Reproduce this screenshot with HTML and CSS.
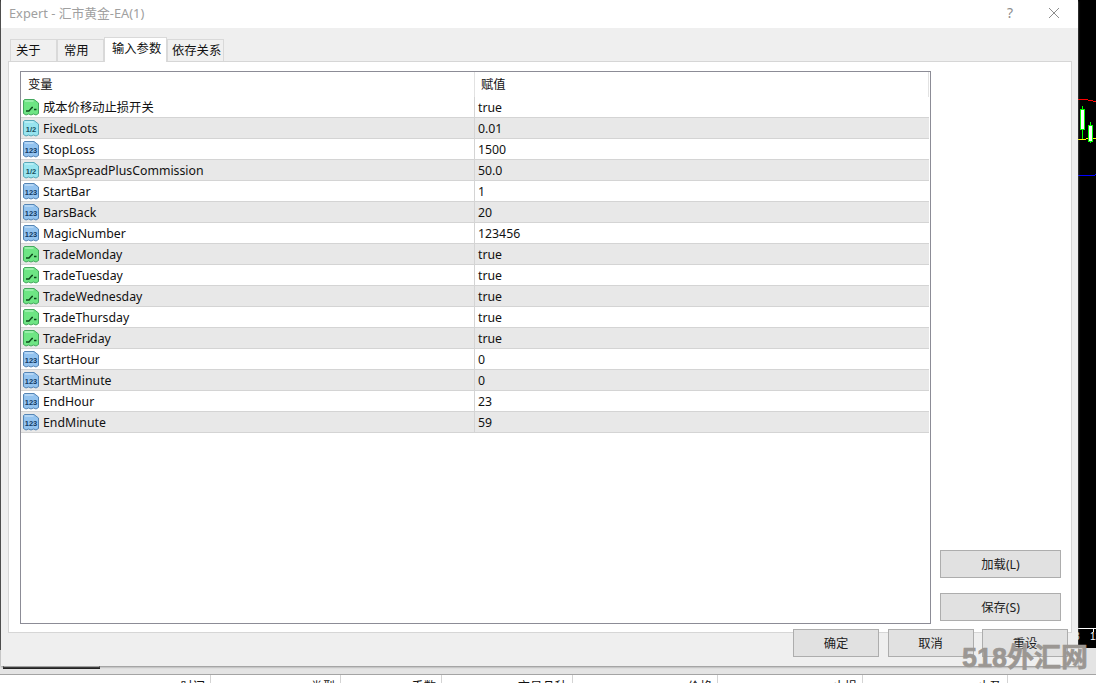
FILE: index.html
```html
<!DOCTYPE html>
<html lang="zh">
<head>
<meta charset="utf-8">
<title>Expert</title>
<link rel="stylesheet" href="styles.css">
</head>
<body>
<svg class="defs" width="0" height="0" aria-hidden="true">
  <defs>
    <symbol id="ico-bool" viewBox="0 0 16 17">
      <path d="M.5 1.500L1.500.5H11L15.500 4V14.500L13 16L10.500 15L8 16L5.500 15L3 16L.5 14.500Z" fill="#6ee584" stroke="#45a85e"/>
      <path d="M2 2H10.500" stroke="#c4f7cf"/>
      <path d="M3 12H6L9 8.500H10M11 10.500H13.500" fill="none" stroke="#0d4a1c" stroke-width="1.3"/>
    </symbol>
    <symbol id="ico-dbl" viewBox="0 0 16 17">
      <path d="M.5 1.500L1.500.5H11L15.500 4V14.500L13 16L10.500 15L8 16L5.500 15L3 16L.5 14.500Z" fill="#98e4ef" stroke="#5aa8b8"/>
      <path d="M2 2H10.500" stroke="#d3f6fa"/>
      <text class="ico-text dbl-text" x="8" y="11.500" text-anchor="middle">1/2</text>
    </symbol>
    <symbol id="ico-int" viewBox="0 0 16 17">
      <path d="M.5 1.500L1.500.5H11L15.500 4V14.500L13 16L10.500 15L8 16L5.500 15L3 16L.5 14.500Z" fill="#93c3ef" stroke="#5585b5"/>
      <path d="M2 2H10.500" stroke="#d5e8fa"/>
      <text class="ico-text int-text" x="8" y="11.500" text-anchor="middle">123</text>
    </symbol>
  </defs>
</svg>
<div class="desktop">
  <div class="left-edge"></div>
  <svg class="chart" width="18" height="648" viewBox="0 0 18 648" aria-hidden="true">
    <rect width="18" height="648" fill="#000"/>
    <path d="M0 99.500H10M10 100.500H15M15 101.500H18" fill="none" stroke="#f00"/>
    <path d="M0 139.500H8M8 138.500H18" fill="none" stroke="#ff0"/>
    <path d="M0 175.500H17M17 174.500H18" fill="none" stroke="#00f"/>
    <path d="M4.500 106V139M12.500 122V143" stroke="#0f0"/>
    <rect x="2.500" y="109.500" width="4" height="20" fill="#fff" stroke="#0f0"/>
    <rect x="10.500" y="125.500" width="4" height="16" fill="#fff" stroke="#0f0"/>
    <path d="M0 628.500H18M15.500 628V632" stroke="#fff"/>
    <text class="tick" x="-4" y="640">8</text>
    <text class="tick" x="12" y="640">12</text>
  </svg>
  <div class="tail-tab"></div>
  <div class="list-head">
    <span class="lh w1">时间</span><span class="lh w2">类型</span><span class="lh w3">手数</span><span class="lh w4">交易品种</span><span class="lh w5">价格</span><span class="lh w5">止损</span><span class="lh w5">止盈</span>
  </div>
  <section class="dialog">
    <header class="titlebar">
      <span class="title">Expert - 汇市黄金-EA(1)</span>
      <span class="help">?</span>
      <svg class="close" width="10" height="10" viewBox="0 0 10 10" aria-hidden="true"><path d="M0 0L10 10M10 0L0 10" stroke="#8d8d8d"/></svg>
    </header>
    <div class="tabs">
      <span class="tab tab-a">关于</span>
      <span class="tab tab-b">常用</span>
      <span class="tab active">输入参数</span>
      <span class="tab tab-d">依存关系</span>
    </div>
    <div class="panel">
      <div class="table">
        <div class="row head"><span class="var">变量</span><span class="val">赋值</span></div>
        <div class="row"><span class="var"><svg class="ico"><use href="#ico-bool"/></svg>成本价移动止损开关</span><span class="val">true</span></div>
        <div class="row"><span class="var"><svg class="ico"><use href="#ico-dbl"/></svg>FixedLots</span><span class="val">0.01</span></div>
        <div class="row"><span class="var"><svg class="ico"><use href="#ico-int"/></svg>StopLoss</span><span class="val">1500</span></div>
        <div class="row"><span class="var"><svg class="ico"><use href="#ico-dbl"/></svg>MaxSpreadPlusCommission</span><span class="val">50.0</span></div>
        <div class="row"><span class="var"><svg class="ico"><use href="#ico-int"/></svg>StartBar</span><span class="val">1</span></div>
        <div class="row"><span class="var"><svg class="ico"><use href="#ico-int"/></svg>BarsBack</span><span class="val">20</span></div>
        <div class="row"><span class="var"><svg class="ico"><use href="#ico-int"/></svg>MagicNumber</span><span class="val">123456</span></div>
        <div class="row"><span class="var"><svg class="ico"><use href="#ico-bool"/></svg>TradeMonday</span><span class="val">true</span></div>
        <div class="row"><span class="var"><svg class="ico"><use href="#ico-bool"/></svg>TradeTuesday</span><span class="val">true</span></div>
        <div class="row"><span class="var"><svg class="ico"><use href="#ico-bool"/></svg>TradeWednesday</span><span class="val">true</span></div>
        <div class="row"><span class="var"><svg class="ico"><use href="#ico-bool"/></svg>TradeThursday</span><span class="val">true</span></div>
        <div class="row"><span class="var"><svg class="ico"><use href="#ico-bool"/></svg>TradeFriday</span><span class="val">true</span></div>
        <div class="row"><span class="var"><svg class="ico"><use href="#ico-int"/></svg>StartHour</span><span class="val">0</span></div>
        <div class="row"><span class="var"><svg class="ico"><use href="#ico-int"/></svg>StartMinute</span><span class="val">0</span></div>
        <div class="row"><span class="var"><svg class="ico"><use href="#ico-int"/></svg>EndHour</span><span class="val">23</span></div>
        <div class="row"><span class="var"><svg class="ico"><use href="#ico-int"/></svg>EndMinute</span><span class="val">59</span></div>
      </div>
      <div class="side">
        <button class="btn side-btn">加载(L)</button>
        <button class="btn side-btn">保存(S)</button>
      </div>
    </div>
    <div class="actions">
      <button class="btn act-btn">确定</button>
      <button class="btn act-btn">取消</button>
      <button class="btn act-btn">重设</button>
    </div>
  </section>
  <div class="watermark">518外汇网</div>
</div>
</body>
</html>
```
FILE: styles.css
```css
* { box-sizing: border-box; }
html, body { margin: 0; padding: 0; }
body { font-family: "Noto Sans", "Noto Sans CJK SC", sans-serif; font-size: 12.3px; color: #111; }
.defs { position: absolute; }
.desktop { position: relative; width: 1096px; height: 683px; overflow: hidden; background: #e4e4e4; }
.left-edge { position: absolute; left: 0; top: 0; width: 1px; height: 650px; background: #333; }
.chart { position: absolute; left: 1078px; top: 0; }
.tick { font-family: "Liberation Sans", sans-serif; font-size: 10px; fill: #fff; }
.ico-text { font-family: "Liberation Sans", sans-serif; font-size: 7.5px; font-weight: 700; }
.dbl-text { fill: #16505e; }
.int-text { fill: #123a63; }
.tail-tab { position: absolute; left: 3px; top: 655px; width: 97px; height: 14px; border: 1px solid #1a1a1a; border-width: 0 1px 2px; background: #d8d8d8; }
.list-head { position: absolute; left: 0; top: 674px; width: 1096px; height: 9px; background: #fff; border-top: 1px solid #a4a4a4; overflow: hidden; display: flex; }
.lh { flex: none; border-right: 1px solid #d4d4d4; text-align: right; padding: 4px 5px 0 0; line-height: 16px; height: 20px; }
.w1 { width: 211px; } .w2 { width: 130px; } .w3 { width: 101px; } .w4 { width: 131px; } .w5 { width: 145px; }
.dialog { position: absolute; left: 1px; top: 0; width: 1077px; height: 666px; background: #efefef; display: flex; flex-direction: column; box-shadow: 0 1px 2px #888; }
.titlebar { height: 28px; flex: none; background: #fff; display: flex; align-items: center; padding: 0 19px 3px 8px; color: #a0a0a0; font-size: 12.8px; }
.title { flex: 1; }
.help { font-size: 14px; color: #8d8d8d; margin-right: 36px; }
.tabs { display: flex; align-items: flex-end; height: 33px; flex: none; padding-left: 9px; }
.tab { height: 22px; padding-bottom: 2px; background: #f0f0f0; border: 1px solid #d9d9d9; border-bottom: 0; display: flex; align-items: center; }
.tab-a { width: 47px; padding-left: 5px; }
.tab-b { width: 47px; padding-left: 6px; }
.tab-d { width: 57px; padding-left: 4px; }
.active { width: 63px; height: 25px; padding: 0 0 5px 7px; background: #fff; position: relative; z-index: 1; margin-bottom: -1px; }
.panel { width: 1064px; height: 572px; margin-left: 7px; flex: none; background: #fff; border: 1px solid #d6d6d6; padding: 9px 8px 8px 11px; display: flex; gap: 9px; }
.table { width: 911px; height: 553px; border: 1px solid #8c8c96; flex: none; padding: 0 1px 0 0; }
.row { height: 21px; display: flex; border-bottom: 1px solid #d4d4d4; line-height: 21px; }
.row:nth-child(odd) { background: #e8e8e8; }
.row.head { height: 25px; background: #fff; line-height: 25px; border: 0; border-right: 1px solid #e2e2e2; }
.var { width: 454px; display: flex; align-items: center; padding-top: 1px; border-right: 1px solid #d4d4d4; white-space: nowrap; }
.head .var { padding: 0 0 0 7px; border-right-color: #e2e2e2; }
.val { padding-left: 3px; flex: 1; }
.head .val { padding-left: 6px; }
.ico { width: 16px; height: 17px; margin: 0 4px 0 2px; flex: none; }
.side { flex: 1; display: flex; flex-direction: column; justify-content: flex-end; gap: 15px; padding-bottom: 3px; }
.btn { font: inherit; color: #222; background: #e1e1e1; border: 1px solid #adadad; padding: 0; height: 28px; }
.side-btn { width: 121px; }
.actions { position: absolute; left: 792px; top: 629px; display: flex; gap: 8.5px; }
.act-btn { width: 86px; }
.watermark { position: absolute; left: 962px; top: 640px; font-size: 27px; line-height: 36px; font-weight: 700; color: #9b9793; -webkit-text-stroke: .6px #9b9793; white-space: nowrap; font-family: "Liberation Sans", "Noto Sans CJK SC", sans-serif; }
```
